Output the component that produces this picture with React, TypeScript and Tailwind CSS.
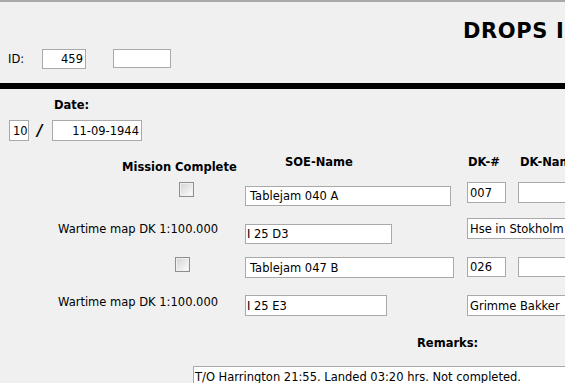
import React from "react";

// Legacy "Drops" entry form, read-only rendering

function Field({
  value = "",
  className = "",
  align = "left",
}: {
  value?: string;
  className?: string;
  align?: "left" | "right";
}) {
  return (
    <div
      className={`flex shrink-0 items-center overflow-hidden whitespace-nowrap border border-[#a9a9a9] bg-white ${
        align === "right" ? "justify-end pr-[2px]" : "pl-[2px]"
      } ${className}`}
    >
      {value}
    </div>
  );
}

function Check({ className = "" }: { className?: string }) {
  return (
    <div
      className={`h-[15px] w-[15px] shrink-0 border border-[#8f8f8f] p-[1px] ${className}`}
    >
      <div className="h-full w-full bg-gradient-to-br from-[#d6d6d6] to-[#fbfbfb]" />
    </div>
  );
}

export default function App() {
  return (
    <div className="h-[383px] w-[565px] overflow-hidden bg-[#f0f0f0] font-['DejaVu_Sans',sans-serif] text-[11.5px] leading-[14px] text-black">
      {/* header */}
      <div className="h-[2px] bg-[#a9a9a9]" />
      <div className="mt-[17px] whitespace-nowrap pl-[463px] text-[21px] font-bold leading-[25px] tracking-[0.6px]">
        DROPS INFO
      </div>
      <div className="mt-[5px] flex items-start">
        <span className="ml-[8px] mt-[3px] w-[34px] shrink-0">ID:</span>
        <Field value="459" align="right" className="h-[20px] w-[44px]" />
        <Field className="ml-[27px] h-[19px] w-[58px]" />
      </div>

      <div className="mt-[14px] h-[6px] bg-black" />

      {/* date */}
      <div className="ml-[54px] mt-[9px] font-bold">Date:</div>
      <div className="mt-[8px] flex items-center">
        <Field value="10" className="ml-[9px] h-[21px] w-[20px] !pl-[3px]" />
        <span className="ml-[8px] w-[15px] shrink-0 text-[15px] font-black italic">/</span>
        <Field value="11-09-1944" align="right" className="h-[21px] w-[90px]" />
      </div>

      {/* column headings */}
      <div className="mt-[14px] flex items-start whitespace-nowrap font-bold">
        <span className="ml-[122px] mt-[5px] w-[163px] shrink-0">Mission Complete</span>
        <span className="w-[183px] shrink-0">SOE-Name</span>
        <span className="w-[52px] shrink-0">DK-#</span>
        <span className="shrink-0">DK-Name</span>
      </div>

      {/* drop 1 */}
      <div className="mt-[8px] flex items-start">
        <Check className="ml-[179px]" />
        <Field value="Tablejam 040 A" className="ml-[51px] mt-[4px] h-[20px] w-[206px] !pl-[4px]" />
        <Field value="007" className="ml-[16px] h-[21px] w-[39px]" />
        <Field className="ml-[12px] h-[21px] w-[80px]" />
      </div>
      <div className="mt-[12px] flex items-start">
        <span className="mt-[4px] w-[245px] shrink-0 whitespace-nowrap pl-[58px]">
          Wartime map DK 1:100.000
        </span>
        <Field value="I 25 D3" className="mt-[6px] h-[20px] w-[147px] !pl-[1px]" />
        <Field value="Hse in Stokholm" className="ml-[75px] h-[21px] w-[120px]" />
      </div>

      {/* drop 2 */}
      <div className="mt-[13px] flex items-start">
        <Check className="ml-[175px]" />
        <Field value="Tablejam 047 B" className="ml-[55px] h-[21px] w-[209px] !pl-[4px]" />
        <Field value="026" className="ml-[13px] h-[20px] w-[39px]" />
        <Field className="ml-[12px] h-[20px] w-[80px]" />
      </div>
      <div className="mt-[17px] flex items-start">
        <span className="w-[245px] shrink-0 whitespace-nowrap pl-[58px]">
          Wartime map DK 1:100.000
        </span>
        <Field value="I 25 E3" className="h-[21px] w-[142px] !pl-[1px]" />
        <Field value="Grimme Bakker" className="ml-[80px] h-[21px] w-[120px]" />
      </div>

      {/* remarks */}
      <div className="ml-[417px] mt-[20px] font-bold">Remarks:</div>
      <div className="ml-[193px] mt-[16px] h-[40px] w-[420px] whitespace-nowrap border border-[#a9a9a9] bg-white pl-[1px] pt-[3px]">
        T/O Harrington 21:55. Landed 03:20 hrs. Not completed.
      </div>
    </div>
  );
}
